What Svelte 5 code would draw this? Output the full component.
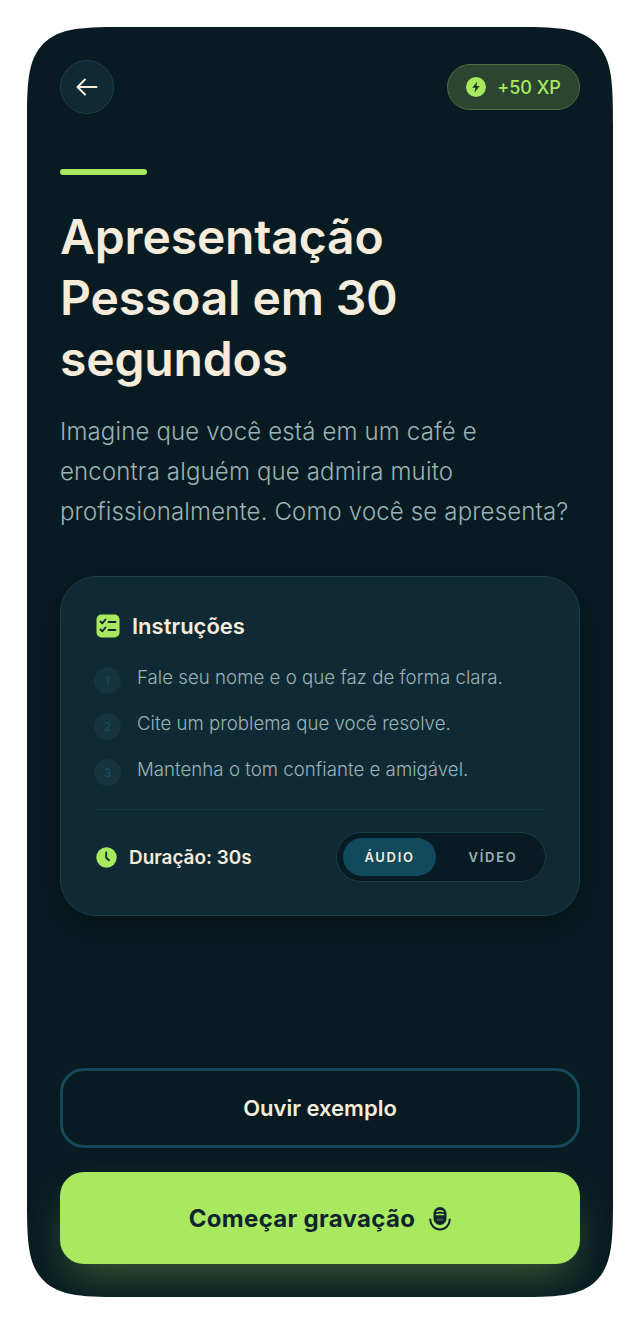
<script>
	const steps = [
		'Fale seu nome e o que faz de forma clara.',
		'Cite um problema que você resolve.',
		'Mantenha o tom confiante e amigável.'
	];
	let mode = $state('audio');
</script>

<main class="screen">
	<header class="top">
		<button class="back" aria-label="Voltar">
			<svg width="22" height="18" viewBox="0 0 22 18" fill="none" stroke="#f5ecdc" stroke-width="2" stroke-linecap="round" stroke-linejoin="round">
				<path d="M1.5 9H20.5M9 1.5L1.5 9L9 16.5" />
			</svg>
		</button>
		<div class="xp">
			<svg width="20" height="20" viewBox="0 0 20 20">
				<circle cx="10" cy="10" r="10" fill="#a8e960" />
				<path d="M11.2 4.6L6.3 10.8H9.4L8.6 15.4L13.7 9.1H10.5Z" fill="#1f3a26" />
			</svg>
			<span>+50 XP</span>
		</div>
	</header>

	<div class="accent"></div>
	<h1>Apresentação Pessoal em 30 segundos</h1>
	<p class="lead">Imagine que você está em um café e encontra alguém que admira muito profissionalmente. Como você se apresenta?</p>

	<section class="card">
		<div class="card-title">
			<svg width="24" height="24" viewBox="0 0 24 24" fill="none">
				<rect x="0.5" y="0.5" width="23" height="23" rx="5" fill="#a8e960" />
				<path d="M4.5 7.5L6.3 9.3L9.5 5.5M4.5 15.5L6.3 17.3L9.5 13.5" stroke="#10242e" stroke-width="1.8" stroke-linecap="round" stroke-linejoin="round" />
				<path d="M12.5 8H19.5M12.5 16H19.5" stroke="#10242e" stroke-width="1.8" stroke-linecap="round" />
			</svg>
			<h2>Instruções</h2>
		</div>
		<ol>
			{#each steps as step, i}
				<li><span class="num">{i + 1}</span><span>{step}</span></li>
			{/each}
		</ol>
		<div class="foot">
			<div class="duration">
				<svg width="21" height="21" viewBox="0 0 21 21" fill="none">
					<circle cx="10.5" cy="10.5" r="10.2" fill="#a8e960" />
					<path d="M10.2 5.5V10.8L13 13.2" stroke="#10242e" stroke-width="1.8" stroke-linecap="round" stroke-linejoin="round" />
				</svg>
				<span>Duração: 30s</span>
			</div>
			<div class="toggle">
				<button class:on={mode === 'audio'} onclick={() => (mode = 'audio')}>ÁUDIO</button>
				<button class:on={mode === 'video'} onclick={() => (mode = 'video')}>VÍDEO</button>
			</div>
		</div>
	</section>

	<div class="actions">
		<button class="outline">Ouvir exemplo</button>
		<button class="primary">
			<span>Começar gravação</span>
			<svg width="22" height="25" viewBox="0 0 22 25" fill="none">
				<rect x="4.5" y="1" width="13" height="18" rx="6.5" fill="#10242e" />
				<path d="M8 5.5C9.5 4.4 12.5 4.4 14 5.5M7.5 8.5H14.5" stroke="#a8e960" stroke-width="1.4" stroke-linecap="round" />
				<path d="M9 12.5V15M11 12.5V15M13 12.5V15" stroke="#a8e960" stroke-width="0.8" opacity="0.6" />
				<path d="M1.2 13.5C1.6 19.5 5.5 23.5 11 23.5C16.5 23.5 20.4 19.5 20.8 13.5" stroke="#10242e" stroke-width="2" stroke-linecap="round" />
			</svg>
		</button>
	</div>
</main>

<style>
	:global(body) {
		background: #fff;
	}

	.screen {
		box-sizing: border-box;
		width: 586px;
		height: 1270px;
		margin: 27px;
		padding: 33px;
		display: flex;
		flex-direction: column;
		background: #081b22;
		border-radius: 60px;
		overflow: hidden;
		font-family: Inter, "Liberation Sans", sans-serif;
		color: #f5ecdc;
	}

	@supports (corner-shape: squircle) {
		.screen {
			border-radius: 104px;
			corner-shape: squircle;
		}
	}

	button {
		font-family: inherit;
		cursor: pointer;
	}

	.top {
		display: flex;
		justify-content: space-between;
		align-items: center;
	}

	.back {
		box-sizing: border-box;
		width: 54px;
		height: 54px;
		padding: 0;
		display: grid;
		place-items: center;
		background: #102a35;
		border: 1px solid #1f3f4b;
		border-radius: 50%;
	}

	.xp {
		box-sizing: border-box;
		width: 133px;
		height: 46px;
		display: flex;
		align-items: center;
		justify-content: center;
		gap: 11px;
		background: #2c4531;
		border: 1px solid #4a7040;
		border-radius: 23px;
		color: #a8e960;
		font-size: 18px;
		font-weight: 500;
	}

	.accent {
		width: 87px;
		height: 6px;
		margin-top: 55px;
		background: #a8e960;
		border-radius: 3px;
	}

	h1 {
		max-width: 420px;
		margin: 31px 0 0;
		font-size: 48px;
		line-height: 61px;
		font-weight: 600;
		letter-spacing: -0.15px;
	}

	.lead {
		max-width: 515px;
		margin: 23px 0 0;
		font-size: 24px;
		line-height: 40px;
		font-weight: 300;
		letter-spacing: 0.15px;
		color: #9ab3b7;
	}

	.card {
		box-sizing: border-box;
		height: 340px;
		margin-top: 44px;
		padding: 34px 33px 0;
		background: #102a35;
		border: 1px solid #1c3d4a;
		border-radius: 36px;
		box-shadow: 0 12px 30px rgba(0, 0, 0, 0.3);
	}

	.card-title {
		display: flex;
		align-items: center;
		gap: 12px;
		margin-left: 2px;
	}

	h2 {
		margin: 0;
		font-size: 22px;
		line-height: 30px;
		font-weight: 600;
	}

	ol {
		margin: 23px 0 0;
		padding: 0;
		list-style: none;
		display: flex;
		flex-direction: column;
		gap: 16px;
	}

	li {
		display: flex;
		align-items: flex-start;
		gap: 16px;
		font-size: 18.65px;
		line-height: 26px;
		font-weight: 300;
		letter-spacing: 0.03px;
		color: #9ab3b7;
	}

	.num {
		flex: none;
		width: 27px;
		height: 27px;
		margin-top: 3px;
		display: grid;
		place-items: center;
		background: #163340;
		border-radius: 50%;
		font-size: 12px;
		font-weight: 500;
		color: #154e5f;
	}

	.foot {
		display: flex;
		align-items: center;
		justify-content: space-between;
		margin-top: 23px;
		padding-top: 22px;
		border-top: 1px solid #193743;
	}

	.duration {
		display: flex;
		align-items: center;
		gap: 12px;
		margin-left: 2px;
		font-size: 18.9px;
		font-weight: 600;
	}

	.toggle {
		box-sizing: border-box;
		width: 210px;
		height: 50px;
		padding: 5px 5px 5px 6px;
		display: flex;
		background: #081b22;
		border: 1px solid #1c3d4a;
		border-radius: 25px;
	}

	.toggle button {
		flex: 1;
		padding: 0 0 0 10px;
		background: none;
		border: 0;
		border-radius: 19px;
		font-size: 13px;
		font-weight: 600;
		letter-spacing: 1.7px;
		color: #9ab3b7;
	}

	.toggle button.on {
		flex: none;
		width: 93px;
		padding: 0;
		background: #114a5c;
		color: #f5ecdc;
	}

	.actions {
		margin-top: auto;
		display: flex;
		flex-direction: column;
		gap: 24px;
	}

	.outline {
		height: 80px;
		background: none;
		border: 3px solid #124a5a;
		border-radius: 24px;
		color: #f5ecdc;
		font-size: 22px;
		font-weight: 600;
	}

	.primary {
		height: 92px;
		display: flex;
		align-items: center;
		justify-content: center;
		gap: 14px;
		background: #a8e960;
		border: 0;
		border-radius: 24px;
		box-shadow: 0 20px 40px -8px rgba(168, 233, 96, 0.3);
		color: #10242e;
		font-size: 24px;
		font-weight: 700;
		letter-spacing: 0.3px;
	}
</style>
